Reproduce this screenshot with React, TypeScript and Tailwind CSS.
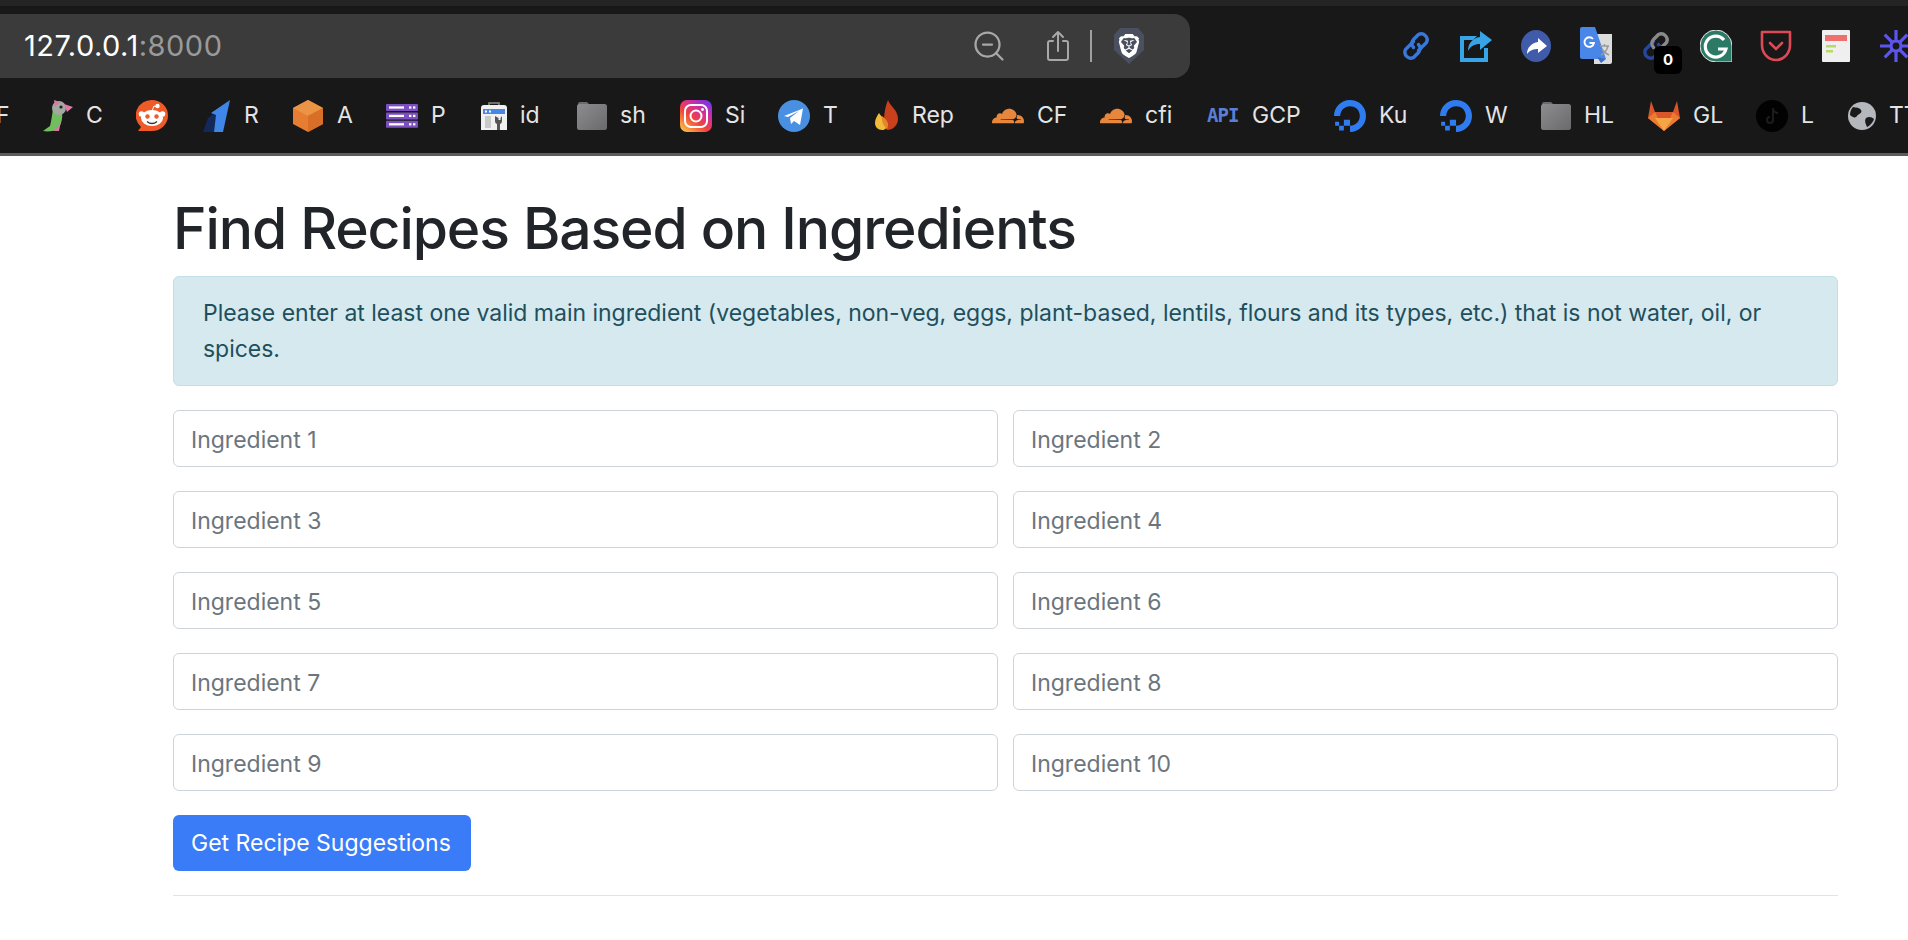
import React from "react";
import { ZoomOut } from "lucide-react";
import { SiCloudflare, SiDigitalocean, SiBrave } from "react-icons/si";

const Folder = () => (
  <svg viewBox="0 0 30 32" className="h-8 w-[30px]">
    <defs>
      <linearGradient id="fold" x1="0" y1="0" x2="1" y2="1">
        <stop offset="0" stopColor="#8d8d90" />
        <stop offset="1" stopColor="#6a6a6c" />
      </linearGradient>
    </defs>
    <path d="M1 4a2 2 0 0 1 2-2h7l3 3H1z" fill="#6c6c6e" />
    <rect x="0" y="4" width="30" height="26" rx="2.5" fill="url(#fold)" />
  </svg>
);

const Parrot = () => (
  <svg viewBox="0 0 30 32" className="h-8 w-[30px]">
    <path d="M10 9c-1 7-2 13-3 17l-7 5c5 1 10 0 14-1 4-4 6-12 5-17z" fill="#6fbf5e" />
    <path d="M10 31c3-2 6-5 8-10l-2 10z" fill="#d779a0" />
    <circle cx="16" cy="8" r="7" fill="#a3a8a0" />
    <path d="M11 0l6 2-5 5z" fill="#d779a0" />
    <path d="M21 4l9 3-6 5z" fill="#e07aa8" />
    <circle cx="18" cy="7" r="1.6" fill="#222" />
  </svg>
);

const Reddit = () => (
  <svg viewBox="0 0 32 32" className="h-8 w-8">
    <path d="M16 0a16 15.500 0 0 1 0 31H2l3-4A16 15.500 0 0 1 16 0z" fill="#ee5a28" />
    <ellipse cx="16" cy="18" rx="11" ry="8" fill="#fff" />
    <circle cx="5.500" cy="14" r="2.800" fill="#fff" />
    <circle cx="26.500" cy="14" r="2.800" fill="#fff" />
    <circle cx="21.500" cy="6" r="2.200" fill="#fff" />
    <path d="M16 11l2-5 3 1" stroke="#fff" strokeWidth="1" fill="none" />
    <circle cx="11.500" cy="16.500" r="2.200" fill="#ee5a28" />
    <circle cx="20.500" cy="16.500" r="2.200" fill="#ee5a28" />
    <path d="M11 21.500c3 2.500 7 2.500 10 0" stroke="#333" strokeWidth="1.400" fill="none" />
  </svg>
);

const Rocket = () => (
  <svg viewBox="0 0 28 32" className="h-8 w-[28px]">
    <path d="M0 32l5-14 9-7-3 21z" fill="#12295a" />
    <path d="M27 0L20 32h-9l2-17-5-2z" fill="#3f86e8" />
  </svg>
);

const Cube = () => (
  <svg viewBox="0 0 32 32" className="h-8 w-8">
    <path d="M16 0l15 8v16l-15 8-15-8V8z" fill="#e67d32" />
    <path d="M16 0l15 8-15 8L1 8z" fill="#ec9446" />
    <path d="M16 16l15-8v16l-15 8z" fill="#d96e26" />
  </svg>
);

const Lines = () => (
  <svg viewBox="0 0 32 24" className="h-6 w-8">
    {[0, 8.4, 16.8].map((y) => (
      <g key={y}>
        <rect y={y} width="32" height="7" rx="0.8" fill="#7c4fc0" />
        <rect x="3" y={y + 2.4} width="15" height="2.2" fill="#fff" />
        <rect x="23" y={y + 2.4} width="2.4" height="2.2" fill="#fff" />
        <rect x="27" y={y + 2.4} width="2.4" height="2.2" fill="#fff" />
      </g>
    ))}
  </svg>
);

const DevConsole = () => (
  <svg viewBox="0 0 26 28" className="h-7 w-[26px]">
    <path d="M8 4V1h10v3" stroke="#8a8a8a" strokeWidth="1.600" fill="none" />
    <path d="M3 3h20a3 3 0 0 1 3 3v22H0V6a3 3 0 0 1 3-3z" fill="#f1f1f1" />
    <rect x="2" y="7" width="22" height="5" fill="#4a86e8" />
    <rect x="4" y="8.500" width="2" height="2" fill="#fff" />
    <rect x="8" y="8.500" width="2" height="2" fill="#fff" />
    <rect x="4" y="14" width="6" height="12" fill="#c9c9c9" />
    <path d="M14 14v5a3 3 0 0 0 2 3v6h3v-6a3 3 0 0 0 2-3v-5l-1.500 2v2h-2v-2z" fill="#555" />
  </svg>
);

const Instagram = () => (
  <svg viewBox="0 0 32 32" className="h-8 w-8">
    <defs>
      <linearGradient id="insta" x1="0.1" y1="1" x2="0.9" y2="0">
        <stop offset="0" stopColor="#fdc543" />
        <stop offset="0.4" stopColor="#f1443b" />
        <stop offset="0.7" stopColor="#cf2ea3" />
        <stop offset="1" stopColor="#6a35f0" />
      </linearGradient>
    </defs>
    <rect width="32" height="32" rx="7" fill="url(#insta)" />
    <rect x="5" y="5" width="22" height="22" rx="6" fill="none" stroke="#fff" strokeWidth="2" />
    <circle cx="16" cy="16" r="5.500" fill="none" stroke="#fff" strokeWidth="2" />
    <circle cx="22.500" cy="9.500" r="1.400" fill="#fff" />
  </svg>
);

const Telegram = () => (
  <svg viewBox="0 0 32 32" className="h-8 w-8">
    <circle cx="16" cy="16" r="16" fill="#4a90e2" />
    <path d="M6 16L25 8.500 22 25l-6-4-3 3-1-6 9-7-11 6z" fill="#fff" />
  </svg>
);

const Flame = () => (
  <svg viewBox="0 0 24 32" className="h-8 w-6">
    <path d="M13 0c2 6 10 10 10 19a11 11 0 0 1-11 11C8 26 8 12 13 0z" fill="#c8401c" />
    <path d="M4 13c-2 3-4 6-4 10 0 4 3 7 7 7 3 0 5-2 5-5 0-5-5-7-8-12z" fill="#f3bb3a" />
    <path d="M7 16c4 3 8 7 5 13-3-2-6-8-5-13z" fill="#e8852c" />
  </svg>
);

const Gitlab = () => (
  <svg viewBox="0 0 32 32" className="h-8 w-8">
    <path d="M3 1l4 11h18l4-11 3 17-16 13L0 18z" fill="#d9552c" />
    <path d="M0 18l16 13-9-19z" fill="#ee7a32" />
    <path d="M32 18L16 31l9-19z" fill="#ee7a32" />
    <path d="M7 18h18l-9 13z" fill="#f6a545" />
  </svg>
);

const TikTok = () => (
  <svg viewBox="0 0 32 32" className="h-8 w-8">
    <circle cx="16" cy="16" r="16" fill="#020202" />
    <path d="M17 8v12a3 3 0 1 1-3-3M17 9c1 3 3 4 5 4" stroke="#1c1c1c" strokeWidth="2" fill="none" />
  </svg>
);

const Globe = () => (
  <svg viewBox="0 0 28 28" className="h-7 w-7">
    <circle cx="14" cy="14" r="14" fill="#b4b8bd" />
    <path d="M5 5c3 1 6 0 8 3s-3 4-4 6-4 2-7-1c0-3 1-6 3-8zM18 16c3-2 6-1 8 1-1 3-4 7-7 8-1-3-3-6-1-9z" fill="#1a1a1a" />
  </svg>
);

const bookmarks: { width: string; icon: React.ReactNode; label?: string }[] = [
  { width: "w-[93px]", icon: <Parrot />, label: "C" },
  { width: "w-[67px]", icon: <Reddit /> },
  { width: "w-[89px]", icon: <Rocket />, label: "R" },
  { width: "w-[94px]", icon: <Cube />, label: "A" },
  { width: "w-[95px]", icon: <Lines />, label: "P" },
  { width: "w-[96px]", icon: <DevConsole />, label: "id" },
  { width: "w-[103px]", icon: <Folder />, label: "sh" },
  { width: "w-[98px]", icon: <Instagram />, label: "Si" },
  { width: "w-[97px]", icon: <Telegram />, label: "T" },
  { width: "w-[117px]", icon: <Flame />, label: "Rep" },
  { width: "w-[108px]", icon: <SiCloudflare className="h-8 w-8 text-[#e8873c]" />, label: "CF" },
  { width: "w-[107px]", icon: <SiCloudflare className="h-8 w-8 text-[#e8873c]" />, label: "cfi" },
  {
    width: "w-[127px]",
    icon: (
      <span className="w-8 font-['DejaVu_Sans_Mono',monospace] text-[19px] font-bold tracking-[-1px] text-[#5a7fd6]">
        API
      </span>
    ),
    label: "GCP",
  },
  { width: "w-[106px]", icon: <SiDigitalocean className="h-8 w-8 text-[#2f7cf0]" />, label: "Ku" },
  { width: "w-[101px]", icon: <SiDigitalocean className="h-8 w-8 text-[#2f7cf0]" />, label: "W" },
  { width: "w-[107px]", icon: <Folder />, label: "HL" },
  { width: "w-[108px]", icon: <Gitlab />, label: "GL" },
  { width: "w-[92px]", icon: <TikTok />, label: "L" },
  { width: "w-[80px]", icon: <Globe />, label: "TT" },
];

const ChainIcon = ({ a, b }: { a: string; b: string }) => (
  <svg viewBox="0 0 32 32" className="h-8 w-8" fill="none" strokeWidth="3.400" strokeLinecap="round">
    <path d="M13.500 11.500l-8 8a6 6 0 0 0 8 8l5-5a6 6 0 0 0 0-8" stroke={a} />
    <path d="M18.500 20.500l8-8a6 6 0 0 0-8-8l-5 5a6 6 0 0 0 0 8" stroke={b} />
  </svg>
);

const extensions: React.ReactNode[] = [
  <ChainIcon a="#3a78d8" b="#3a78d8" />,
  <svg viewBox="0 0 32 32" className="h-8 w-8">
    <path d="M17 6H0v26h28V18h-4v10H4V10h9z" fill="#38a4e8" />
    <path d="M20 1l12 9-12 10v-6c-6 0-9 2-12 7 0-8 5-13 12-14z" fill="#38a4e8" />
  </svg>,
  <svg viewBox="0 0 32 32" className="h-8 w-8">
    <ellipse cx="16" cy="16" rx="15" ry="16" fill="#3f5ba9" />
    <path d="M18 8l9 8-9 7v-4c-4 0-8 1-11 5 0-6 4-11 11-12z" fill="#fff" />
  </svg>,
  <svg viewBox="0 0 32 38" className="h-[38px] w-8">
    <path d="M14 7h18v28a2 2 0 0 1-2 2H14z" fill="#dcdcdc" />
    <path d="M0 2a2 2 0 0 1 2-2h13l11 32H2a2 2 0 0 1-2-2z" fill="#4a86e8" />
    <path d="M17 30l4 6 5-4z" fill="#3b6fc4" />
    <path d="M13 12a4.800 4.800 0 1 0 1 4H9.500" fill="none" stroke="#fff" strokeWidth="1.800" />
    <path d="M20 19h9M24.500 17v2M21 28c4-2 6-5 7-9M22 22c2 3 4 5 7 6" stroke="#999" strokeWidth="1.400" fill="none" />
  </svg>,
  <div className="relative h-8 w-8">
    <ChainIcon a="#27479f" b="#8a8a8a" />
    <span className="absolute left-[14px] top-[16px] flex h-7 w-7 items-center justify-center rounded-[6px] bg-black text-[15px] font-bold text-white">
      0
    </span>
  </div>,
  <svg viewBox="0 0 32 32" className="h-8 w-8">
    <path d="M16 0a16 16 0 0 1 16 16v16H16A16 16 0 0 1 16 0z" fill="#2c7a66" stroke="#e8e8e8" strokeWidth="1" />
    <path d="M24 10a10.500 10.500 0 1 0 2 9h-8" fill="none" stroke="#fff" strokeWidth="3.200" />
  </svg>,
  <svg viewBox="0 0 32 32" className="h-8 w-8" fill="none" stroke="#dd4a55" strokeWidth="2.600">
    <path d="M2 2h28v13a14 15 0 0 1-28 0z" strokeLinejoin="round" />
    <path d="M10 13l6 6 6-6" strokeLinecap="round" />
  </svg>,
  <svg viewBox="0 0 28 32" className="h-8 w-[28px]">
    <rect width="28" height="32" rx="1" fill="#efefef" />
    <rect x="3" y="5" width="22" height="6" fill="#ef6f6c" />
    <rect x="4" y="15" width="10" height="2.500" fill="#b7d96a" />
    <rect x="4" y="20" width="7" height="2.500" fill="#b7d96a" />
  </svg>,
  <svg viewBox="0 0 32 32" className="h-8 w-8" fill="none" stroke="#5b55ee" strokeWidth="3.200">
    <path d="M16 0v32M0 16h32M4.700 4.700l22.600 22.600M27.300 4.700L4.700 27.300" />
    <circle cx="16" cy="16" r="5" fill="#181818" />
  </svg>,
];

const ingredients = Array.from({ length: 10 }, (_, i) => `Ingredient ${i + 1}`);

export default function App() {
  return (
    <div className="h-screen overflow-hidden bg-white font-['Inter',sans-serif]">
      {/* Browser chrome */}
      <div className="h-[156px] overflow-hidden border-b-[3px] border-[#5c5c5c] bg-[#181818]">
        <div className="h-[6px] bg-[#242424]" />
        <div className="mt-[8px] flex h-[64px] items-center">
          <div className="flex h-full w-[1190px] shrink-0 items-center rounded-r-[16px] bg-[#3b3b3b] pl-6">
            <span className="text-[29px] tracking-[0.5px] text-white">
              127.0.0.1<span className="text-[#9a9a9a]">:8000</span>
            </span>
            <div className="ml-auto flex items-center text-[#a8a8a8]">
              <ZoomOut className="h-9 w-9" strokeWidth={1.5} />
              <svg
                viewBox="0 0 24 32"
                className="ml-[39px] h-8 w-6"
                fill="none"
                stroke="currentColor"
                strokeWidth="2"
                strokeLinecap="round"
                strokeLinejoin="round"
              >
                <path d="M12 21V2M7 7l5-5 5 5" />
                <path d="M7 11H4a2 2 0 0 0-2 2v15a2 2 0 0 0 2 2h16a2 2 0 0 0 2-2V13a2 2 0 0 0-2-2h-3" />
              </svg>
              <div className="ml-[20px] h-8 w-[2px] bg-[#a0a0a0]" />
              <div className="relative ml-[22px] mr-[46px] flex h-[36px] w-[30px] items-center justify-center">
                <svg viewBox="0 0 30 36" className="absolute inset-0 h-full w-full">
                  <path d="M6 0h18l6 7v15l-15 14L0 22V7z" fill="#4b5060" />
                </svg>
                <SiBrave className="relative h-[24px] w-[24px] text-white" />
              </div>
            </div>
          </div>
          <div className="ml-[196px] flex shrink-0 items-center">
            {extensions.map((icon, i) => (
              <div key={i} className="flex w-[60px] shrink-0 justify-center">
                {icon}
              </div>
            ))}
          </div>
        </div>
        <div className="flex h-[75px] items-center text-[23px] text-[#e4e4e4]">
          <span className="w-[43px] shrink-0 -indent-[4px]">F</span>
          {bookmarks.map((b, i) => (
            <div key={i} className={`flex shrink-0 items-center gap-[13px] ${b.width}`}>
              {b.icon}
              {b.label && <span>{b.label}</span>}
            </div>
          ))}
        </div>
      </div>

      {/* Page */}
      <div className="pl-[173px] pr-[70px]">
        <h1 className="pb-[6px] pt-[31px] text-[57px] font-medium leading-[83px] tracking-[-1.1px] text-[#212529]">
          Find Recipes Based on Ingredients
        </h1>
        <div className="rounded-[6px] border border-[#bfe0e7] bg-[#d5e9ee] px-[29px] py-[18px] text-[23px] leading-[36px] tracking-[-0.02px] text-[#1f4f5d]">
          Please enter at least one valid main ingredient (vegetables, non-veg, eggs, plant-based, lentils, flours and
          its types, etc.) that is not water, oil, or spices.
        </div>
        <div className="mt-[24px] grid grid-cols-2 gap-x-[15px] gap-y-[24px]">
          {ingredients.map((name) => (
            <input
              key={name}
              placeholder={name}
              className="h-[57px] w-full rounded-[6px] border border-[#ced4da] bg-white px-[17px] pt-[2px] text-[23px] text-[#212529] outline-none placeholder:text-[#6c757d]"
            />
          ))}
        </div>
        <button className="mt-[24px] h-[56px] rounded-[6px] bg-[#3a7bf7] pl-[18px] pr-[20px] text-[23px] text-white">
          Get Recipe Suggestions
        </button>
        <hr className="mt-[24px] border-[#e2e3e5]" />
      </div>
    </div>
  );
}
